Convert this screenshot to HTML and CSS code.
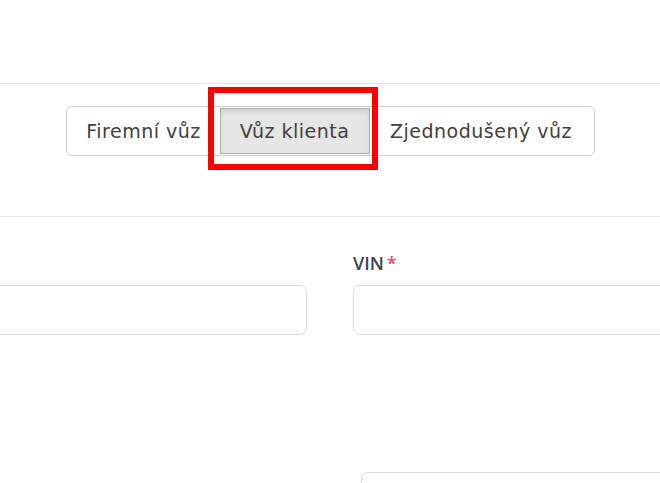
FILE: index.html
```html
<!DOCTYPE html>
<html lang="cs">
<head>
    <meta charset="UTF-8">
    <meta name="viewport" content="width=device-width, initial-scale=1.0">
    <title>Vůz klienta</title>
    <link rel="stylesheet" href="styles.css">
</head>
<body>

    <div class="page-top"></div>

    <div class="switch-bar">
        <div class="switch-group">
            <button class="switch-btn first">Firemní vůz</button>
            <button class="switch-btn active">Vůz klienta
                <span class="highlight"></span>
            </button>
            <button class="switch-btn last">Zjednodušený vůz</button>
        </div>
    </div>

    <div class="form-row">
        <div class="field">
            <label class="field-label">&nbsp;</label>
            <input class="field-input" type="text">
        </div>
        <div class="field">
            <label class="field-label">VIN<span class="req">*</span></label>
            <input class="field-input" type="text">
        </div>
    </div>

    <div class="form-row lower">
        <div class="field"></div>
        <div class="field">
            <div class="box"></div>
        </div>
    </div>

</body>
</html>
```

FILE: styles.css
```css
body { margin: 0; background: #fff; font-family: "Open Sans", Arial, sans-serif; overflow: hidden; height: 483px; }
.page-top { height: 83px; border-bottom: 1px solid #e6e6e6; }

.switch-bar { height: 110px; padding-top: 22px; border-bottom: 1px solid #e6e6e6; text-align: center; }
.switch-group {
    display: inline-flex; border: 1px solid #cfcfcf; border-radius: 6px; padding: 1px;
    height: 50px; box-sizing: border-box;
}
.switch-btn {
    position: relative; border: none; background: none; font-family: "DejaVu Sans", sans-serif;
    font-size: 19px; letter-spacing: 0.5px; color: #404040; padding: 0; cursor: pointer; box-sizing: border-box;
}
.switch-btn.first { width: 152px; }
.switch-btn.last { width: 223px; }
.switch-btn.active {
    width: 150px; background: #e6e6e6; border: 1px solid #adadad;
    box-shadow: inset 0 3px 5px rgba(0, 0, 0, 0.1);
}
.highlight {
    position: absolute; left: -13px; top: -22px; right: -9px; bottom: -17px;
    border: 6px solid #ff0000; pointer-events: none;
}

.form-row { display: grid; grid-template-columns: 1fr 1fr; gap: 46px; margin: 0 -94px; }
.field { display: flex; flex-direction: column; }
.field-label { font-size: 18px; font-weight: 600; color: #3f4254; margin: 34px 0 10px; line-height: 24px; }
.req { color: #f1416c; margin-left: 3px; }
.field-input { height: 50px; box-sizing: border-box; border: 1px solid #dcdcdc; border-radius: 7px; outline: none; }
.lower { margin-top: 137px; }
.box { margin-left: 8px; height: 40px; border: 1px solid #dcdcdc; border-radius: 7px; }
```
